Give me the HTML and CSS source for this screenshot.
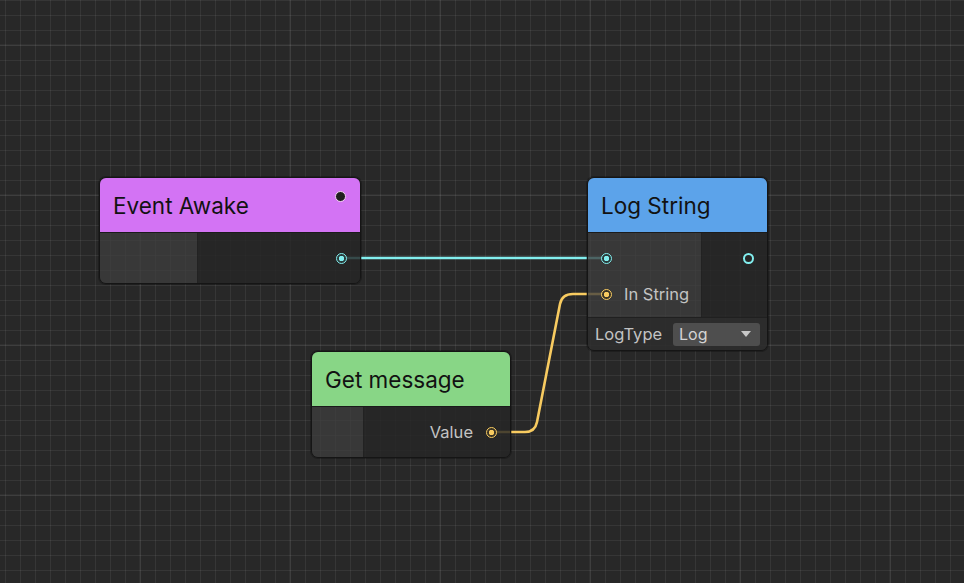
FILE: index.html
```html
<!DOCTYPE html>
<html>
<head>
<meta charset="utf-8">
<link rel="stylesheet" href="styles.css">
</head>
<body>
<div class="canvas">
  <svg class="edges" width="964" height="583" viewBox="0 0 964 583">
    <path d="M 344 258 H 603" class="edge cyan"/>
    <path d="M 492 432 H 525 Q 535 432 537 422 L 560 304 Q 562 294 573 294 H 603" class="edge yellow"/>
  </svg>

  <div class="node awake">
    <div class="head purple">Event Awake<span class="port flow"></span></div>
    <div class="body">
      <div class="col in w-awake"></div>
      <div class="col out">
        <div class="row end"><span class="port data cyan-p"></span></div>
      </div>
    </div>
  </div>

  <div class="node logstr">
    <div class="head blue">Log String</div>
    <div class="body">
      <div class="col in w-log">
        <div class="row"><span class="port data cyan-p"></span></div>
        <div class="row"><span class="port data yellow-p"></span><span class="label">In String</span></div>
      </div>
      <div class="col out">
        <div class="row end"><span class="port ring"></span></div>
      </div>
    </div>
    <div class="field">
      <span class="label">LogType</span>
      <div class="dropdown"><span>Log</span><span class="tri"></span></div>
    </div>
  </div>

  <div class="node getmsg">
    <div class="head green">Get message</div>
    <div class="body">
      <div class="col in w-get"></div>
      <div class="col out">
        <div class="row end"><span class="label">Value</span><span class="port data yellow-p"></span></div>
      </div>
    </div>
  </div>
</div>
</body>
</html>
```

FILE: styles.css
```css
html, body {
  margin: 0;
  padding: 0;
  background: #282828;
  overflow: hidden;
}

.canvas {
  position: relative;
  width: 964px;
  height: 583px;
  background-color: #282828;
  background-image:
    linear-gradient(to right, rgba(255,255,255,0.04) 2px, transparent 2px),
    linear-gradient(to bottom, rgba(255,255,255,0.04) 2px, transparent 2px),
    linear-gradient(to right, rgba(255,255,255,0.065) 1px, transparent 1px),
    linear-gradient(to bottom, rgba(255,255,255,0.065) 1px, transparent 1px);
  background-size: 150px 150px, 150px 150px, 15px 15px, 15px 15px;
  background-position: 139px 0, 0 44px, 5px 0, 0 0;
  font-family: Inter, "Noto Sans", sans-serif;
}

.edges {
  position: absolute;
  left: 0;
  top: 0;
}

.edge {
  fill: none;
  stroke-width: 2.6;
  stroke-linecap: round;
  stroke-linejoin: round;
}
.edge.cyan { stroke: #82eeee; }
.edge.yellow { stroke: #f8cb60; }

.node {
  position: absolute;
  border: 1px solid #151515;
  border-radius: 7px;
  overflow: hidden;
  box-shadow: 0 0 0 1px rgba(0,0,0,0.25);
}

.awake { left: 99px; top: 177px; width: 260px; }
.logstr { left: 587px; top: 177px; width: 179px; }
.getmsg { left: 311px; top: 351px; width: 198px; }

.head {
  position: relative;
  height: 54px;
  border-bottom: 1px solid #1b1b1b;
  display: flex;
  align-items: center;
  padding-left: 13px;
  font-size: 22.5px;
  color: #121212;
  white-space: nowrap;
}
.purple { background: #d373f4; }
.blue { background: #5ca3ea; }
.green { background: #88d686; }

.body {
  display: flex;
}

.col {
  display: flex;
  flex-direction: column;
  padding: 7px 0 5px;
  min-height: 38px;
}
.col.in {
  background: rgba(62,62,62,0.78);
  border-right: 1px solid rgba(20,20,20,0.6);
  flex: none;
}
.col.out {
  flex: 1;
  background: rgba(38,38,38,0.82);
}
.w-awake { width: 97px; }
.w-log { width: 113px; }
.w-get { width: 51px; }

.row {
  height: 36px;
  display: flex;
  align-items: center;
  padding: 0 13px;
  white-space: nowrap;
}
.col.in .row { padding-right: 0; }
.row.end { justify-content: flex-end; }

.label {
  font-size: 16.5px;
  color: #c3c3c3;
  white-space: nowrap;
}
.row .port + .label { margin-left: 12px; }
.row .label + .port { margin-left: 13px; }

.port {
  display: inline-block;
  box-sizing: border-box;
  border-radius: 50%;
  flex: none;
}
.port.flow {
  position: absolute;
  right: 14px;
  top: 13px;
  width: 11px;
  height: 11px;
  border: 1.6px solid #f5d2f5;
  background: #1f1f1f;
}
.port.data {
  width: 11px;
  height: 11px;
  border: 1.7px solid currentColor;
}
.cyan-p {
  color: #82eeee;
  background: radial-gradient(circle, #82eeee 0 2.5px, #2a3a3a 3px);
}
.yellow-p {
  color: #f8cb60;
  background: radial-gradient(circle, #f8cb60 0 2.5px, #3a3426 3px);
}
.port.ring {
  width: 11px;
  height: 11px;
  border: 2px solid #82eeee;
  background: transparent;
}

.field {
  height: 32px;
  display: flex;
  align-items: center;
  justify-content: space-between;
  padding: 0 7px;
  background: rgba(44,44,44,0.9);
  border-top: 1px solid rgba(20,20,20,0.5);
}

.dropdown {
  width: 87px;
  height: 23px;
  box-sizing: border-box;
  border-radius: 3px;
  background: #4e4e4e;
  display: flex;
  align-items: center;
  justify-content: space-between;
  padding: 0 9px 0 6px;
  font-size: 16px;
  color: #d4d4d4;
}
.tri {
  width: 0;
  height: 0;
  border-left: 5.5px solid transparent;
  border-right: 5.5px solid transparent;
  border-top: 6px solid #c8c8c8;
}
```
